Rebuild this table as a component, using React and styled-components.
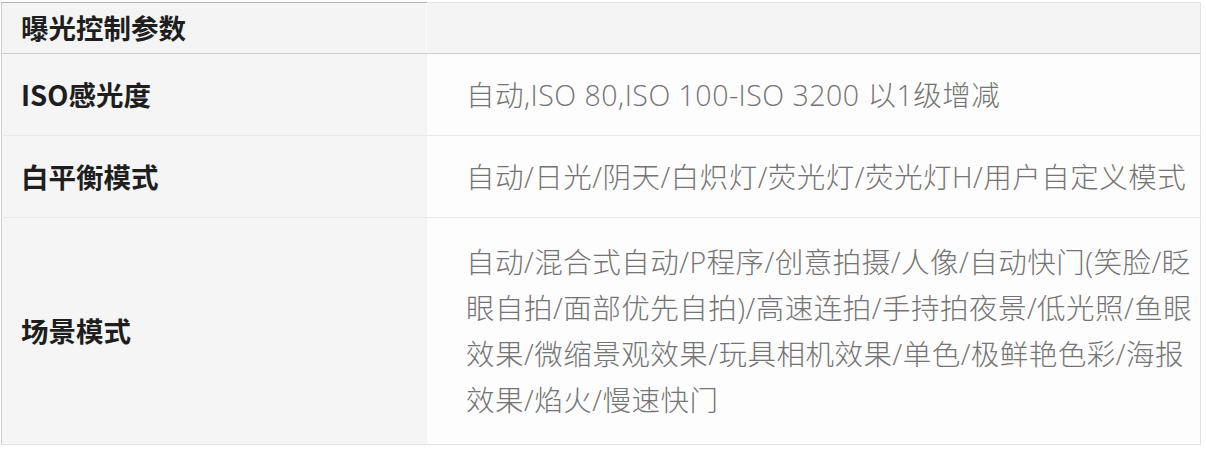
import React from 'react'
import styled, { createGlobalStyle } from 'styled-components'

const GlobalStyle = createGlobalStyle`
  html, body {
    margin: 0;
    padding: 0;
    background: #ffffff;
  }
  body {
    font-family: 'Noto Sans CJK SC', 'Noto Sans', sans-serif;
  }
`

const rows = [
  {
    label: 'ISO感光度',
    lines: ['自动,ISO 80,ISO 100-ISO 3200 以1级增减'],
  },
  {
    label: '白平衡模式',
    lines: ['自动/日光/阴天/白炽灯/荧光灯/荧光灯H/用户自定义模式'],
  },
  {
    label: '场景模式',
    lines: [
      '自动/混合式自动/P程序/创意拍摄/人像/自动快门(笑脸/眨',
      '眼自拍/面部优先自拍)/高速连拍/手持拍夜景/低光照/鱼眼',
      '效果/微缩景观效果/玩具相机效果/单色/极鲜艳色彩/海报',
      '效果/焰火/慢速快门',
    ],
  },
]

const App = () => {
  return (
    <>
      <GlobalStyle />
      <Page>
        <Table>
          <colgroup>
            <col style={{ width: 425 }} />
            <col />
          </colgroup>
          <thead>
            <tr>
              <HeadCell>曝光控制参数</HeadCell>
              <HeadCell $blank />
            </tr>
          </thead>
          <tbody>
            {rows.map(row => (
              <Row key={row.label} $tall={row.lines.length > 1}>
                <LabelCell>{row.label}</LabelCell>
                <ValueCell>
                  {row.lines.map(line => (
                    <Line key={line}>{line}</Line>
                  ))}
                </ValueCell>
              </Row>
            ))}
          </tbody>
        </Table>
      </Page>
    </>
  )
}

export default App

const Page = styled.div`
  padding: 2px 0 0 1px;
  width: 1200px;
`

const Table = styled.table`
  width: 1200px;
  border-collapse: collapse;
  table-layout: fixed;
  border-left: 1px solid #cfcfcf;
  border-right: 1px solid #e2e2e2;
  border-bottom: 1px solid #e2e2e2;
`

const HeadCell = styled.th`
  height: 51px;
  padding: 0 0 0 19px;
  box-sizing: border-box;
  text-align: left;
  vertical-align: middle;
  background: #f4f4f4;
  border-top: 1px solid ${p => (p.$blank ? '#e4e4e4' : '#b4b4b4')};
  border-bottom: 1px solid #cdcdcd;
  border-left: ${p => (p.$blank ? '1px solid #fbfbfb' : 'none')};
  font-size: 27.5px;
  font-weight: 700;
  color: #1e1e1e;
  line-height: 1;
`

const Row = styled.tr`
  height: ${p => (p.$tall ? '227px' : '82px')};
  border-bottom: 1px solid #e9e9e9;
  &:last-child {
    border-bottom: none;
  }
`

const LabelCell = styled.td`
  padding: 0 0 0 19px;
  vertical-align: middle;
  background: #f5f5f5;
  font-size: 27.5px;
  font-weight: 700;
  color: #1e1e1e;
  line-height: 1;
`

const ValueCell = styled.td`
  padding: 0 0 0 39px;
  vertical-align: middle;
  background: #fdfdfd;
  border-left: 1px solid #f0f0f0;
  font-family: 'Open Sans', 'Noto Sans CJK SC', sans-serif;
  font-size: 28.5px;
  font-weight: 300;
  letter-spacing: 0.5px;
  color: #747474;
  line-height: 46px;
  white-space: nowrap;
`

const Line = styled.div`
  height: 46px;
`
